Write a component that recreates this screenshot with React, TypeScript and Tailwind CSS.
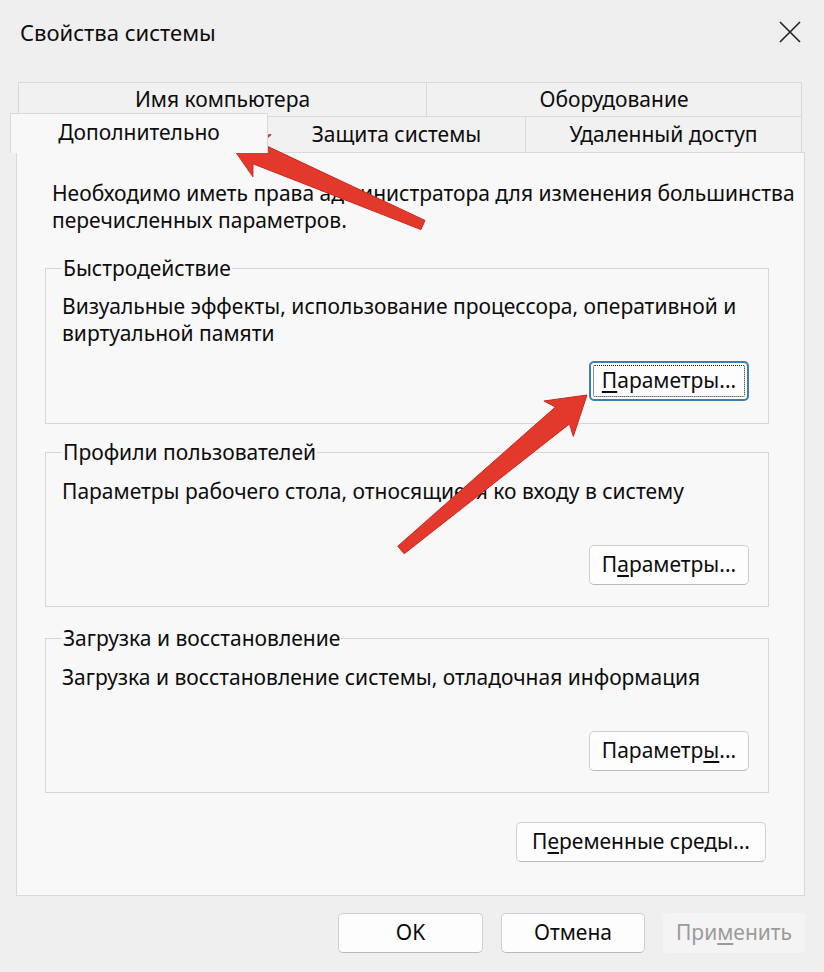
import React from 'react';

type Pt = [number, number];

// red annotation arrow, from tail to tip
const arrowPoints = (tail: Pt, tip: Pt) => {
  const [tx, ty] = tail;
  const [hx, hy] = tip;
  const len = Math.hypot(hx - tx, hy - ty);
  const ux = (hx - tx) / len;
  const uy = (hy - ty) / len;
  const nx = -uy;
  const ny = ux;
  const headLen = 32;
  const headW = 23;
  const neckW = 11;
  const tailW = 5;
  const bx = hx - ux * headLen;
  const by = hy - uy * headLen;
  const wx = bx - ux * 5;
  const wy = by - uy * 5;
  const pts: Pt[] = [
    [tx + nx * tailW, ty + ny * tailW],
    [bx + nx * neckW, by + ny * neckW],
    [wx + nx * headW, wy + ny * headW],
    [hx, hy],
    [wx - nx * headW, wy - ny * headW],
    [bx - nx * neckW, by - ny * neckW],
    [tx - nx * tailW, ty - ny * tailW],
  ];
  return pts.map(([x, y]) => `${x.toFixed(1)},${y.toFixed(1)}`).join(' ');
};

const Btn: React.FC<{ children: React.ReactNode; className?: string; focused?: boolean; disabled?: boolean }> = ({
  children,
  className = '',
  focused,
  disabled,
}) => {
  if (disabled) {
    return (
      <div className={`flex items-center justify-center rounded-[4px] bg-[#f4f4f4] text-[#9b9b9b] ${className}`}>
        {children}
      </div>
    );
  }
  return (
    <div
      className={`relative flex items-center justify-center rounded-[5px] bg-[#fdfdfd] ${
        focused ? 'border-2 border-[#3b7fae]' : 'border border-[#cfcfcf] border-b-[#b9b9b9]'
      } ${className}`}
    >
      {focused && <div className="absolute inset-[2px] rounded-[2px] border border-dotted border-[#222]" />}
      {children}
    </div>
  );
};

const Group: React.FC<{ title: string; className?: string; children: React.ReactNode }> = ({ title, className = '', children }) => (
  <fieldset className={`border border-[#d6d6d6] pl-[16px] pr-[19px] ${className}`}>
    <legend className="px-[1px] leading-[26px]">{title}</legend>
    {children}
  </fieldset>
);

export default function App() {
  return (
    <div className="relative w-[824px] h-[972px] bg-[#efefef] text-[21px] text-[#0c0c0c] font-['Noto_Sans',sans-serif] overflow-hidden">
      {/* title bar */}
      <div className="flex h-[64px] items-center justify-between pl-[20px] pr-[20px]">
        <span className="text-[22px] leading-[26px]">Свойства системы</span>
        <svg width="24" height="24" viewBox="0 0 24 24" className="mr-[2px]">
          <path d="M2 2 L22 22 M22 2 L2 22" stroke="#222" strokeWidth="1.6" />
        </svg>
      </div>

      <div className="pl-[16px] pr-[19px] pt-[18px]">
        {/* back row of tabs */}
        <div className="flex h-[35px] pl-[2px] pr-[3px]">
          <div className="flex w-[409px] items-center justify-center border border-b-0 border-[#d9d9d9] bg-[#f1f1f1]">
            Имя компьютера
          </div>
          <div className="flex w-[375px] items-center justify-center border border-b-0 border-l-0 border-[#d9d9d9] bg-[#f1f1f1]">
            Оборудование
          </div>
        </div>
        {/* front row of tabs */}
        <div className="-mt-[1px] flex h-[36px] items-end pr-[3px]">
          <div className="relative z-10 -mb-[1px] -ml-[6px] flex h-[40px] w-[258px] items-center justify-center border border-b-0 border-[#d9d9d9] bg-[#f8f8f8] pb-[2px]">
            Дополнительно
          </div>
          <div className="flex h-[36px] w-[258px] items-center justify-center border border-b-0 border-l-0 border-[#d9d9d9] bg-[#f1f1f1]">
            Защита системы
          </div>
          <div className="flex h-[36px] w-[276px] items-center justify-center border border-b-0 border-l-0 border-[#d9d9d9] bg-[#f1f1f1]">
            Удаленный доступ
          </div>
        </div>

        {/* tab page */}
        <div className="flex h-[744px] flex-col border border-[#d9d9d9] bg-[#f8f8f8] pl-[28px] pr-[35px] pt-[27px]">
          <p className="whitespace-nowrap pl-[7px] leading-[27px]">
            Необходимо иметь права администратора для изменения большинства
            <br />
            перечисленных параметров.
          </p>

          <Group title="Быстродействие" className="mt-[21px] pb-[22px]">
            <p className="mt-[12px] whitespace-nowrap leading-[27px]">
              Визуальные эффекты, использование процессора, оперативной и
              <br />
              виртуальной памяти
            </p>
            <div className="mt-[14px] flex justify-end">
              <Btn focused className="h-[40px] w-[160px]">
                <span>
                  <span className="underline underline-offset-[3px]">П</span>араметры...
                </span>
              </Btn>
            </div>
          </Group>

          <Group title="Профили пользователей" className="mt-[15px] pb-[21px]">
            <p className="mt-[13px] whitespace-nowrap leading-[27px]">
              Параметры рабочего стола, относящиеся ко входу в систему
            </p>
            <div className="mt-[40px] flex justify-end">
              <Btn className="h-[40px] w-[160px]">
                <span>
                  П<span className="underline underline-offset-[3px]">а</span>раметры...
                </span>
              </Btn>
            </div>
          </Group>

          <Group title="Загрузка и восстановление" className="mt-[18px] pb-[21px]">
            <p className="mt-[13px] whitespace-nowrap leading-[27px]">
              Загрузка и восстановление системы, отладочная информация
            </p>
            <div className="mt-[40px] flex justify-end">
              <Btn className="h-[40px] w-[160px]">
                <span>
                  Параметр<span className="underline underline-offset-[3px]">ы</span>...
                </span>
              </Btn>
            </div>
          </Group>

          <div className="mt-[29px] flex justify-end pr-[3px]">
            <Btn className="h-[40px] w-[250px]">
              <span>
                П<span className="underline underline-offset-[3px]">е</span>ременные среды...
              </span>
            </Btn>
          </div>
        </div>
      </div>

      {/* dialog buttons */}
      <div className="flex items-center justify-end gap-[18px] pr-[19px] pt-[17px]">
        <Btn className="h-[40px] w-[145px]">OK</Btn>
        <Btn className="h-[40px] w-[144px]">Отмена</Btn>
        <Btn disabled className="h-[40px] w-[142px]">
          <span>
            При<span className="underline underline-offset-[3px]">м</span>енить
          </span>
        </Btn>
      </div>

      {/* annotation arrows */}
      <svg className="pointer-events-none absolute left-0 top-0" width="824" height="972" viewBox="0 0 824 972">
        <polygon points={arrowPoints([423, 225], [228, 141])} fill="#e3382c" stroke="#c92a20" strokeWidth="1" strokeLinejoin="round" />
        <polygon points={arrowPoints([401, 550], [587, 395])} fill="#e3382c" stroke="#c92a20" strokeWidth="1" strokeLinejoin="round" />
      </svg>
    </div>
  );
}
